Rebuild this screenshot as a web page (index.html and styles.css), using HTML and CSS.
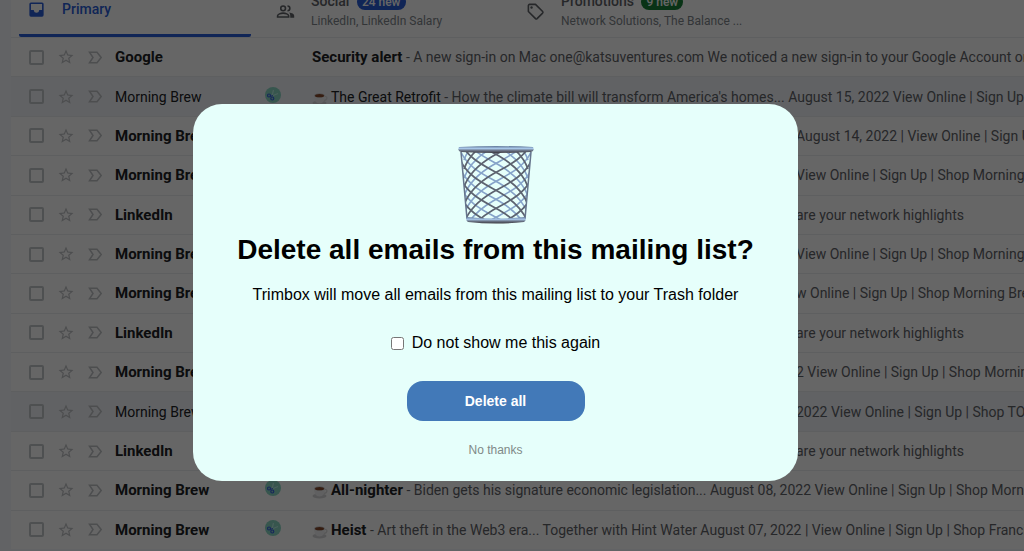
FILE: index.html
```
<!DOCTYPE html>
<html lang="en">
<head>
<meta charset="utf-8">
<title>Inbox</title>
<link rel="stylesheet" href="styles.css">
</head>
<body>
<svg class="defs" aria-hidden="true">
  <symbol id="star" viewBox="0 0 24 24"><path fill="currentColor" d="M22 9.24l-7.19-.62L12 2 9.19 8.63 2 9.24l5.46 4.73L5.82 21 12 17.27 18.18 21l-1.63-7.03L22 9.24zM12 15.4l-3.76 2.27 1-4.28-3.32-2.88 4.38-.38L12 6.1l1.71 4.04 4.38.38-3.32 2.88 1 4.28L12 15.4z"/></symbol>
  <symbol id="mark" viewBox="0 0 15 13"><path fill="none" stroke="currentColor" stroke-width="1.5" d="M1.5 1.2H9L13.2 6.5 9 11.8H1.5L5 6.5z"/></symbol>
  <symbol id="trim" viewBox="0 0 16 16"><circle cx="8" cy="8" r="8" fill="#8ad6c4"/><path d="M7 9L8.5 3M7 9L13 6.500" stroke="#b8f0e4" stroke-width="1.200" fill="none"/><circle cx="4" cy="8.500" r="1.500" fill="none" stroke="#3a62e0" stroke-width="1.200"/><circle cx="7.300" cy="11.500" r="1.500" fill="none" stroke="#3a62e0" stroke-width="1.200"/><path d="M5 9.500l3-1" stroke="#3a62e0"/></symbol>
  <symbol id="cup" viewBox="0 0 16 15"><ellipse cx="7.500" cy="12" rx="7" ry="2.500" fill="#d5d5d8"/><path d="M12 5.500c4-1 4 4-1 4" fill="none" stroke="#ddd" stroke-width="1.300"/><path d="M2 4.500h11c0 5-2 8-5.500 8S2 9.500 2 4.500z" fill="#f0f0f2"/><ellipse cx="7.500" cy="4.500" rx="5.500" ry="2.200" fill="#cfcfd2"/><ellipse cx="7.500" cy="4.700" rx="4.500" ry="1.600" fill="#874a2c"/></symbol>
</svg>

<main class="mail">
  <nav class="tabs">
    <a class="tab tab-active" href="#primary">
      <svg class="tab-icon" viewBox="0 0 24 24"><path fill="currentColor" fill-rule="evenodd" d="M19 3H5a2 2 0 0 0-2 2v14a2 2 0 0 0 2 2h14a2 2 0 0 0 2-2V5a2 2 0 0 0-2-2zM19 12.500H15.500C15 15 14 16 12 16S9 15 8.500 12.500H5V5H19z"/></svg>
      <span class="tab-title">Primary</span>
    </a>
    <a class="tab" href="#social">
      <svg class="tab-icon" viewBox="0 0 24 24"><g fill="none" stroke="currentColor" stroke-width="2"><circle cx="9" cy="8" r="3"/><path d="M2 19v-1.500c0-2 4-3.500 7-3.500s7 1.500 7 3.500V19z"/><path d="M14.500 5a3 3 0 0 1 0 6"/></g><path fill="currentColor" d="M16.700 13.200C20 13.700 23 15 23 17.500V20h-5v-2.500c0-1.700-.5-3.200-1.300-4.300z"/></svg>
      <span class="tab-text"><span class="tab-title">Social <span class="badge badge-blue">24 new</span></span><span class="tab-sub">LinkedIn, LinkedIn Salary</span></span>
    </a>
    <a class="tab" href="#promotions">
      <svg class="tab-icon" viewBox="0 0 24 24"><path fill="none" stroke="currentColor" stroke-width="2" stroke-linejoin="round" d="M3 4.500A1.500 1.500 0 0 1 4.500 3H12l9 9a1.500 1.500 0 0 1 0 2l-7 7a1.500 1.500 0 0 1-2 0l-9-9z"/><circle cx="7" cy="7" r="1.500" fill="currentColor"/></svg>
      <span class="tab-text"><span class="tab-title">Promotions <span class="badge badge-green">9 new</span></span><span class="tab-sub">Network Solutions, The Balance ...</span></span>
    </a>
  </nav>

  <ul class="list">
    <li class="row unread"><input class="check" type="checkbox" aria-label="Select"><svg class="star"><use href="#star"/></svg><svg class="mark"><use href="#mark"/></svg><span class="from">Google</span><span></span><span class="snippet"><b>Security alert</b> - A new sign-in on Mac one@katsuventures.com We noticed a new sign-in to your Google Account on</span></li>
    <li class="row read"><input class="check" type="checkbox" aria-label="Select"><svg class="star"><use href="#star"/></svg><svg class="mark"><use href="#mark"/></svg><span class="from">Morning Brew</span><svg class="trim"><use href="#trim"/></svg><span class="snippet"><svg class="cup"><use href="#cup"/></svg><b>The Great Retrofit</b> - How the climate bill will transform America's homes... August 15, 2022 View Online | Sign Up |</span></li>
    <li class="row unread"><input class="check" type="checkbox" aria-label="Select"><svg class="star"><use href="#star"/></svg><svg class="mark"><use href="#mark"/></svg><span class="from">Morning Brew</span><span class="tail">August 14, 2022 | View Online | Sign Up</span></li>
    <li class="row unread"><input class="check" type="checkbox" aria-label="Select"><svg class="star"><use href="#star"/></svg><svg class="mark"><use href="#mark"/></svg><span class="from">Morning Brew</span><span class="tail">View Online | Sign Up | Shop Morning</span></li>
    <li class="row unread"><input class="check" type="checkbox" aria-label="Select"><svg class="star"><use href="#star"/></svg><svg class="mark"><use href="#mark"/></svg><span class="from">LinkedIn</span><span class="tail">are your network highlights</span></li>
    <li class="row unread"><input class="check" type="checkbox" aria-label="Select"><svg class="star"><use href="#star"/></svg><svg class="mark"><use href="#mark"/></svg><span class="from">Morning Brew</span><span class="tail">View Online | Sign Up | Shop Morning</span></li>
    <li class="row unread"><input class="check" type="checkbox" aria-label="Select"><svg class="star"><use href="#star"/></svg><svg class="mark"><use href="#mark"/></svg><span class="from">Morning Brew</span><span class="tail">w Online | Sign Up | Shop Morning Brew</span></li>
    <li class="row unread"><input class="check" type="checkbox" aria-label="Select"><svg class="star"><use href="#star"/></svg><svg class="mark"><use href="#mark"/></svg><span class="from">LinkedIn</span><span class="tail">are your network highlights</span></li>
    <li class="row unread"><input class="check" type="checkbox" aria-label="Select"><svg class="star"><use href="#star"/></svg><svg class="mark"><use href="#mark"/></svg><span class="from">Morning Brew</span><span class="tail">2 View Online | Sign Up | Shop Morning</span></li>
    <li class="row read"><input class="check" type="checkbox" aria-label="Select"><svg class="star"><use href="#star"/></svg><svg class="mark"><use href="#mark"/></svg><span class="from">Morning Brew</span><span class="tail">2022 View Online | Sign Up | Shop TOO</span></li>
    <li class="row unread"><input class="check" type="checkbox" aria-label="Select"><svg class="star"><use href="#star"/></svg><svg class="mark"><use href="#mark"/></svg><span class="from">LinkedIn</span><span class="tail">are your network highlights</span></li>
    <li class="row unread"><input class="check" type="checkbox" aria-label="Select"><svg class="star"><use href="#star"/></svg><svg class="mark"><use href="#mark"/></svg><span class="from">Morning Brew</span><svg class="trim"><use href="#trim"/></svg><span class="snippet"><svg class="cup"><use href="#cup"/></svg><b>All-nighter</b> - Biden gets his signature economic legislation... August 08, 2022 View Online | Sign Up | Shop Morning</span></li>
    <li class="row unread"><input class="check" type="checkbox" aria-label="Select"><svg class="star"><use href="#star"/></svg><svg class="mark"><use href="#mark"/></svg><span class="from">Morning Brew</span><svg class="trim"><use href="#trim"/></svg><span class="snippet"><svg class="cup"><use href="#cup"/></svg><b>Heist</b> - Art theft in the Web3 era... Together with Hint Water August 07, 2022 | View Online | Sign Up | Shop Francis</span></li>
  </ul>
</main>

<div class="overlay">
  <section class="dialog" role="dialog" aria-modal="true" aria-labelledby="dialog-title">
    <svg class="basket" viewBox="0 0 78 78" aria-hidden="true">
      <defs>
        <linearGradient id="rim" x1="0" x2="0" y1="0" y2="1"><stop offset="0" stop-color="#5f7596"/><stop offset=".35" stop-color="#a9c8ea"/><stop offset=".65" stop-color="#6a7486"/><stop offset="1" stop-color="#3d3a40"/></linearGradient>
        <clipPath id="body"><path d="M4 5H74L68 73Q39 78 10 73z"/></clipPath>
        <path id="wire" d="M3 0C10 18 30 26 42 33S66 50 71 64"/>
        <g id="back-wires"><use href="#wire" y="-50"/><use href="#wire" y="-32"/><use href="#wire" y="-14"/><use href="#wire" y="4"/><use href="#wire" y="22"/><use href="#wire" y="40"/></g>
        <g id="front-wires"><use href="#wire" y="-41"/><use href="#wire" y="-23"/><use href="#wire" y="-5"/><use href="#wire" y="13"/><use href="#wire" y="31"/><use href="#wire" y="49"/></g>
      </defs>
      <g clip-path="url(#body)" fill="none">
        <g stroke="#86a3c9" stroke-width="1.600"><use href="#back-wires"/><use href="#back-wires" transform="translate(78 0) scale(-1 1)"/></g>
        <g stroke="#5d6370" stroke-width="1.700"><use href="#front-wires"/><use href="#front-wires" transform="translate(78 0) scale(-1 1)"/></g>
      </g>
      <path d="M4 6L10 73M74 6L68 73" stroke="#66758c" stroke-width="1.500"/>
      <path d="M2 1Q39-1 76 1Q78 5 74 6Q39 8 4 6Q0 5 2 1z" fill="url(#rim)"/>
      <path d="M10 71Q39 74 68 71Q70 74 67 76Q39 79 11 76Q8 74 10 71z" fill="url(#rim)"/>
    </svg>
    <h1 class="title" id="dialog-title">Delete all emails from this mailing list?</h1>
    <p class="lead">Trimbox will move all emails from this mailing list to your Trash folder</p>
    <label class="again"><input class="again-box" type="checkbox">Do not show me this again</label>
    <button class="primary" type="button">Delete all</button>
    <button class="dismiss" type="button">No thanks</button>
  </section>
</div>
</body>
</html>
```
FILE: styles.css
```
* { box-sizing: border-box; }
body {
  margin: 0;
  height: 100vh;
  overflow: hidden;
  background: #f6f8fc;
  color: #202124;
  font: 14px/20px Roboto, "Open Sans", sans-serif;
}
.defs { position: absolute; width: 0; height: 0; }
.mail {
  display: flex;
  flex-direction: column;
  height: 100vh;
  padding: 0 0 2px 11px;
}
.tabs {
  display: flex;
  flex: none;
  height: 56px;
  margin-top: -19px;
  background: #fff;
}
.tab {
  display: flex;
  align-items: center;
  gap: 16px;
  width: 250px;
  padding: 4px 0 0 15px;
  color: #5f6368;
  text-decoration: none;
  white-space: nowrap;
}
.tab-active {
  width: 232px;
  margin: 0 10px 0 8px;
  padding: 0 0 0 8px;
  background: linear-gradient(#2a5cd8, #2a5cd8) bottom / 100% 3px no-repeat;
  border-radius: 2px;
  color: #2a5cd8;
}
.tab-icon { flex: none; width: 19px; height: 19px; }
.tab-text { display: flex; flex-direction: column; }
.tab-title { font-size: 14px; font-weight: 500; }
.tab-sub { font-size: 12px; color: #80868b; }
.badge {
  display: inline-block;
  margin-left: 4px;
  padding: 0 5px;
  border-radius: 8px;
  color: #fff;
  font-size: 12px;
  line-height: 16px;
}
.badge-blue { background: #2a5cd8; }
.badge-green { background: #188038; }
.list {
  display: grid;
  flex: 1;
  grid-auto-rows: 1fr;
  min-height: 0;
  margin: 0;
  padding: 0;
  list-style: none;
}
.row {
  display: grid;
  grid-template-columns: 18px 31px 31px 148px 55px 484px 1fr;
  align-items: center;
  min-height: 0;
  padding-left: 18px;
  border-top: 1px solid #eceef0;
  background: #fff;
  white-space: nowrap;
  overflow: hidden;
}
.read { background: #f2f5fa; }
.check {
  appearance: none;
  width: 15px;
  height: 15px;
  margin: 0;
  border: 2px solid #c4c7cb;
  border-radius: 2px;
}
.star { width: 18px; height: 18px; margin-left: 10px; color: #c0c3c6; }
.mark { width: 15px; height: 13px; margin-left: 10px; color: #c0c3c6; }
.from { padding-left: 6px; }
.unread .from, .unread b { font-size: 15px; font-weight: 700; }
.read b { font-weight: 400; }
.trim { width: 16px; height: 16px; margin-left: 8px; margin-bottom: 4px; }
.snippet, .tail { color: #5f6368; }
.snippet { grid-column: 6 / 8; }
.tail { grid-column: 7; }
.snippet b { color: #202124; }
.cup { width: 16px; height: 15px; margin-right: 3px; vertical-align: -4px; }
.overlay {
  position: fixed;
  inset: 0;
  display: flex;
  align-items: center;
  justify-content: center;
  padding: 34px 33px 0 0;
  background: rgba(0, 0, 0, .6);
  font-family: "Liberation Sans", Arial, sans-serif;
}
.dialog {
  display: flex;
  flex-direction: column;
  align-items: center;
  padding: 42px 44px 22px;
  border-radius: 29px;
  background: #e6fffb;
  color: #000;
}
.basket { width: 78px; height: 78px; }
.title { margin: 8px 0 0; font-size: 28px; line-height: 36px; }
.lead { margin: 17px 0 0; font-size: 16px; line-height: 20px; }
.again {
  display: flex;
  align-items: center;
  gap: 8px;
  margin-top: 28px;
  font-size: 16px;
  line-height: 20px;
}
.again-box { width: 13px; height: 13px; margin: 0; }
.primary {
  width: 178px;
  height: 40px;
  margin-top: 28px;
  border: 0;
  border-radius: 16px;
  background: #4279b8;
  color: #fff;
  font: 700 14px/20px "Liberation Sans", Arial, sans-serif;
}
.dismiss {
  margin-top: 20px;
  padding: 0;
  border: 0;
  background: none;
  color: #808987;
  font: 12px/18px "Liberation Sans", Arial, sans-serif;
}
```
